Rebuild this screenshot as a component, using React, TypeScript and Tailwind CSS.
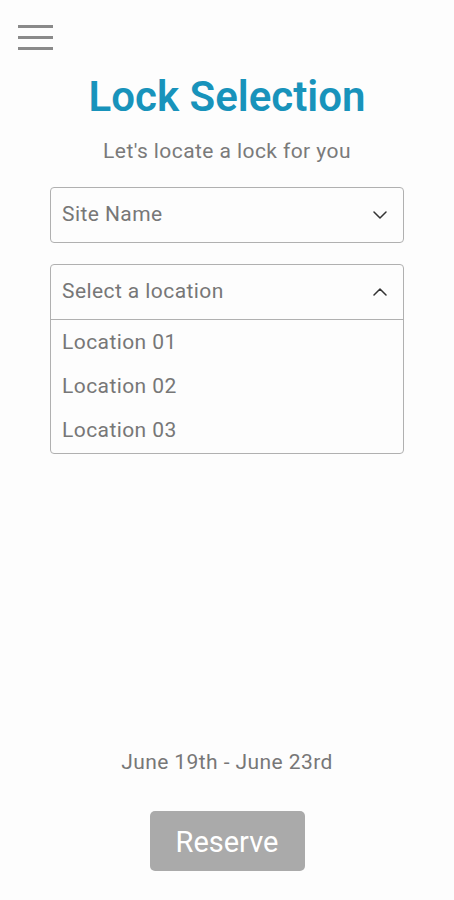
import React from "react";

const Chevron = ({ up }: { up?: boolean }) => (
  <svg width="14" height="8" viewBox="0 0 14 8" fill="none" className={up ? "rotate-180" : ""}>
    <path d="M1 1l6 6 6-6" stroke="#333" strokeWidth="1.5" strokeLinecap="round" strokeLinejoin="round" />
  </svg>
);

export default function App() {
  const locations = ["Location 01", "Location 02", "Location 03"];
  return (
    <div className="w-[454px] h-[900px] bg-[#fdfdfd] flex flex-col font-['Roboto',sans-serif]">
      <div className="pt-[25px] pl-[18px]">
        <div className="w-[35px] flex flex-col gap-[8px]">
          <div className="h-[3px] bg-[#8a8a8a]" />
          <div className="h-[3px] bg-[#8a8a8a]" />
          <div className="h-[3px] bg-[#8a8a8a]" />
        </div>
      </div>

      <h1 className="mt-[23px] text-center text-[42px] leading-[48px] font-semibold text-[#1893bb]">
        Lock Selection
      </h1>
      <p className="mt-[18px] text-center text-[21px] leading-[24px] tracking-[0.02em] text-[#7a7a7a]">
        Let's locate a lock for you
      </p>

      <div className="mx-[50px] mt-[24px] flex flex-col gap-[21px] text-[21px] tracking-[0.02em] text-[#777]">
        <div className="h-[56px] border border-[#b0b0b0] rounded-[4px] flex items-center justify-between pl-[11px] pr-[16px]">
          <span>Site Name</span>
          <Chevron />
        </div>

        <div className="border border-[#b0b0b0] rounded-[4px]">
          <div className="h-[55px] border-b border-[#b0b0b0] flex items-center justify-between pl-[11px] pr-[16px]">
            <span>Select a location</span>
            <Chevron up />
          </div>
          <div className="pt-[1px]">
            {locations.map((l) => (
              <div key={l} className="h-[44px] flex items-center pl-[11px]">
                {l}
              </div>
            ))}
          </div>
        </div>
      </div>

      <div className="flex-1" />

      <p className="text-center text-[21px] leading-[24px] tracking-[0.02em] text-[#777]">June 19th - June 23rd</p>
      <div className="mt-[37px] mb-[29px] flex justify-center">
        <button className="w-[155px] h-[60px] pt-[4px] rounded-[5px] bg-[#aaaaaa] text-white text-[29px]">
          Reserve
        </button>
      </div>
    </div>
  );
}
